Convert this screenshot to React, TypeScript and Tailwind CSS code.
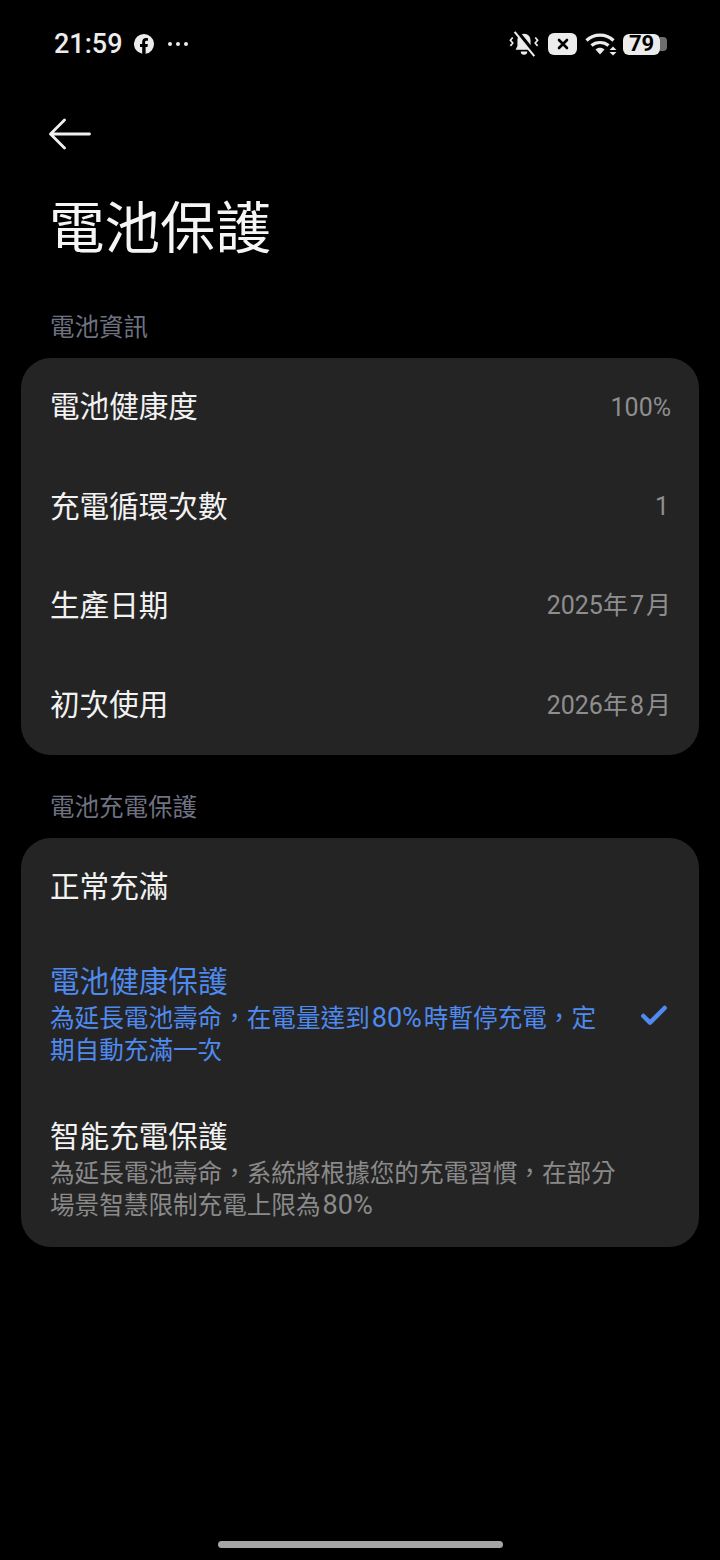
/**
 * 電池保護 settings page
 */
import type { ReactNode } from 'react'
import { Check } from 'lucide-react'

const FONT = 'font-["Roboto","Noto_Sans_CJK_TC",sans-serif]'

const infoRows: { label: string; value: ReactNode }[] = [
  { label: '電池健康度', value: '100%' },
  { label: '充電循環次數', value: <span className="mr-[2px]">1</span> },
  {
    label: '生產日期',
    value: (
      <>
        2025年<span className="mx-[2px]">7</span>月
      </>
    ),
  },
  {
    label: '初次使用',
    value: (
      <>
        2026年<span className="mx-[2px]">8</span>月
      </>
    ),
  },
]

function StatusBar() {
  return (
    <div className="flex h-[88px] items-center justify-between pr-[53px] pl-[54px]">
      <div className="flex items-center">
        <span className="text-[27px] leading-none font-medium text-[#ececec]">21:59</span>
        <svg viewBox="0 0 20 20" className="ml-[11px] h-[20px] w-[20px]">
          <path
            fill="#ececec"
            d="M10 0a10 10 0 0 0-1.8 19.84V13H6v-3h2.2V7.900c0-2.500 1.500-3.900 3.700-3.900 1 0 1.900.15 2.100.2v2.600h-1.400c-1.200 0-1.500.7-1.500 1.500V10h2.800l-.45 3H11.600v6.870A10 10 0 0 0 10 0z"
          />
        </svg>
        <div className="ml-[14px] flex gap-[4px]">
          <span className="h-[4px] w-[4px] rounded-full bg-[#ececec]" />
          <span className="h-[4px] w-[4px] rounded-full bg-[#ececec]" />
          <span className="h-[4px] w-[4px] rounded-full bg-[#ececec]" />
        </div>
      </div>
      <div className="flex items-center">
        <svg viewBox="0 0 32 28" className="h-[28px] w-[30px]" fill="none">
          <path
            fill="#ececec"
            d="M16 3c-4.500 0-7 3.200-7 7.500V16l-2 4h18l-2-4v-5.500C23 6.200 20.500 3 16 3z"
          />
          <path fill="#ececec" d="M12.500 22h7a3.500 3.500 0 0 1-7 0z" />
          <path stroke="#000" strokeWidth="4.500" d="M8 0l21 26" />
          <path stroke="#ececec" strokeWidth="2.200" d="M6 1l21 26" />
          <path stroke="#ececec" strokeWidth="1.800" d="M4 7l-2.500 3 2.500 3-2.500 3M28 7l2.500 3-2.500 3 2.500 3" />
        </svg>
        <div className="ml-[9px] flex h-[22px] w-[29px] items-center justify-center rounded-[6px] bg-[#ececec]">
          <svg viewBox="0 0 12 12" className="h-[12px] w-[12px]">
            <path stroke="#000" strokeWidth="2.600" strokeLinecap="round" d="M2 2l8 8M10 2l-8 8" />
          </svg>
        </div>
        <svg viewBox="0 0 33 24" className="ml-[8px] h-[24px] w-[33px]" fill="none">
          <path stroke="#ececec" strokeWidth="3.200" d="M1.500 8.500C9 1.200 21 1.200 28.500 8.500" />
          <path stroke="#ececec" strokeWidth="3.200" d="M6.500 13.500C11 9.500 19 9.500 23.500 13.500" />
          <path fill="#ececec" d="M10.500 17.500c2.600-2.200 6.400-2.200 9 0L15 22.500z" />
          <path fill="#ececec" d="M28 14.500l3.500 3.500h-7zM28 23.500l3.500-3.500h-7z" />
        </svg>
        <div className="ml-[5px] flex items-center">
          <div className="flex h-[21px] w-[37px] items-center justify-center rounded-[6px] bg-[#ececec] text-[22px] leading-none font-bold text-black">
            79
          </div>
          <div className="h-[14px] w-[7px] rounded-r-[4px] bg-[#6e6e6e]" />
        </div>
      </div>
    </div>
  )
}

function BackArrow() {
  return (
    <svg viewBox="0 0 42 32" className="ml-[49px] h-[32px] w-[42px]" fill="none">
      <path
        stroke="#f0f0f0"
        strokeWidth="2.800"
        strokeLinecap="round"
        strokeLinejoin="round"
        d="M40.500 16H2M15.500 2 1.500 16l14 14"
      />
    </svg>
  )
}

function SectionLabel({ children }: { children: string }) {
  return <div className="pl-[50px] text-[24.500px] leading-[34px] text-[#6f7280]">{children}</div>
}

function Percent80() {
  return <span className="mx-[2px] text-[27px] leading-none">80%</span>
}

function OptionRow({
  title,
  lines,
  active = false,
}: {
  title: string
  lines: ReactNode[]
  active?: boolean
}) {
  return (
    <div className="flex items-center justify-between pt-[27px] pr-[29px] pb-[25px] pl-[29px]">
      <div>
        <div className={`text-[29.600px] leading-[36px] ${active ? 'text-[#4f8aee]' : 'text-[#f2f2f2]'}`}>
          {title}
        </div>
        <div className="mt-[3px]">
          {lines.map((line, i) => (
            <div
              key={i}
              className={`h-[32px] text-[24.600px] leading-[32px] ${active ? 'text-[#4f8aee]' : 'text-[#8a8a8a]'}`}>
              {line}
            </div>
          ))}
        </div>
      </div>
      {active && <Check className="h-[32px] w-[32px] text-[#4f8aee]" strokeWidth={3.400} />}
    </div>
  )
}

export default function App() {
  return (
    <div className={`relative h-[1560px] w-[720px] overflow-hidden bg-black ${FONT}`}>
      <StatusBar />
      <div className="pt-[30px]">
        <BackArrow />
      </div>
      <h1 className="mt-[40px] pl-[49px] text-[55.500px] leading-[80px] font-normal text-[#f5f5f5]">
        電池保護
      </h1>
      <div className="mt-[41px]">
        <SectionLabel>電池資訊</SectionLabel>
      </div>
      <div className="mx-[21px] mt-[13px] rounded-[30px] bg-[#242424]">
        {infoRows.map((row) => (
          <div
            key={row.label}
            className="flex h-[99.250px] items-center justify-between pr-[28px] pl-[29px]">
            <span className="text-[29.600px] text-[#f2f2f2]">{row.label}</span>
            <span className="text-[25px] text-[#8e8e8e]">{row.value}</span>
          </div>
        ))}
      </div>
      <div className="mt-[36px]">
        <SectionLabel>電池充電保護</SectionLabel>
      </div>
      <div className="mx-[21px] mt-[13px] rounded-[30px] bg-[#242424]">
        <div className="flex h-[99px] items-center pl-[29px] text-[29.600px] text-[#f2f2f2]">
          正常充滿
        </div>
        <OptionRow
          active
          title="電池健康保護"
          lines={[
            <>
              為延長電池壽命，在電量達到
              <Percent80 />
              時暫停充電，定
            </>,
            '期自動充滿一次',
          ]}
        />
        <OptionRow
          title="智能充電保護"
          lines={[
            '為延長電池壽命，系統將根據您的充電習慣，在部分',
            <>
              場景智慧限制充電上限為
              <Percent80 />
            </>,
          ]}
        />
      </div>
      <div className="absolute bottom-[12px] left-[218px] h-[7px] w-[285px] rounded-full bg-[#a6a6a6]" />
    </div>
  )
}
